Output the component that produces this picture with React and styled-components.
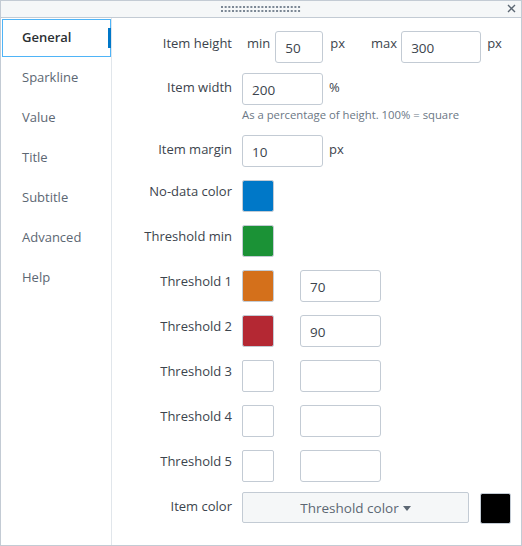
import React from "react";
import styled, { createGlobalStyle } from "styled-components";

const Global = createGlobalStyle`
  html, body {
    margin: 0;
    padding: 0;
    background: #fff;
  }
  * {
    box-sizing: border-box;
  }
`;

const Panel = styled.div`
  width: 522px;
  height: 546px;
  border: 1px solid #c3cbd4;
  display: flex;
  flex-direction: column;
  font-family: "Open Sans", "Liberation Sans", sans-serif;
  font-size: 13px;
  color: #3c444d;
  background: #fff;
`;

const TitleBar = styled.div`
  height: 17px;
  flex: none;
  background: #f5f7f8;
  border-bottom: 1px solid #c3cbd4;
  display: flex;
  align-items: center;
  justify-content: center;
  position: relative;
`;

const CloseButton = styled.span`
  position: absolute;
  right: 5px;
  top: 3px;
  width: 9px;
  height: 9px;
  display: flex;
`;

const Body = styled.div`
  flex: 1;
  display: flex;
  min-height: 0;
`;

const Sidebar = styled.ul`
  width: 111px;
  flex: none;
  margin: 0;
  padding: 1px 0 0 1px;
  list-style: none;
  border-right: 1px solid #e1e6eb;
  display: flex;
  flex-direction: column;
  gap: 2px;
`;

const Tab = styled.li`
  position: relative;
  height: 38px;
  width: 109px;
  padding-left: 19px;
  padding-bottom: 2px;
  display: flex;
  align-items: center;
  border: 1px solid ${({ $active }) => ($active ? "#4fb4f7" : "transparent")};
  color: ${({ $active }) => ($active ? "#2b3033" : "#5c6773")};
  font-weight: ${({ $active }) => ($active ? 600 : 400)};

  &::after {
    content: "";
    display: ${({ $active }) => ($active ? "block" : "none")};
    position: absolute;
    right: -1px;
    top: 8px;
    width: 3px;
    height: 20px;
    background: #0077c8;
  }
`;

const Content = styled.div`
  flex: 1;
  padding-top: 13px;
  display: flex;
  flex-direction: column;
  gap: 13px;
`;

const Row = styled.div`
  display: grid;
  grid-template-columns: 120px 1fr;
  column-gap: 10px;
  margin-top: ${({ $mt }) => $mt || 0}px;
`;

const Label = styled.div`
  text-align: right;
  line-height: 20px;
  padding-top: ${({ $pt }) => ($pt != null ? $pt : 1)}px;
  white-space: nowrap;
`;

const Controls = styled.div`
  display: flex;
  align-items: flex-start;
`;

const Stack = styled.div`
  display: flex;
  flex-direction: column;
`;

const Unit = styled.span`
  line-height: 20px;
  padding-top: ${({ $pt }) => ($pt != null ? $pt : 2)}px;
  margin-left: ${({ $ml }) => $ml || 0}px;
  margin-right: ${({ $mr }) => $mr || 0}px;
  color: #3c444d;
`;

const Input = styled.div`
  width: ${({ $w }) => $w}px;
  height: 32px;
  border: 1px solid #c3cbd4;
  border-radius: 3px;
  padding: 0 9px;
  display: flex;
  align-items: center;
  font-size: 13.5px;
  padding-top: 2px;
  color: #3c444d;
  background: #fff;
  margin-left: ${({ $ml }) => $ml || 0}px;
`;

const Help = styled.div`
  font-size: 11.3px;
  color: #6b7785;
  margin-top: 3px;
  line-height: 14px;
`;

const Swatch = styled.div`
  width: 32px;
  height: 32px;
  border: 1px solid #c3cbd4;
  border-radius: 2px;
  background: ${({ $color }) => $color || "#fff"};
  background-clip: padding-box;
`;

const Dropdown = styled.div`
  width: 227px;
  height: 31px;
  border: 1px solid #c3cbd4;
  border-radius: 2px;
  background: #f5f7f8;
  color: #5c6773;
  font-size: 13.5px;
  display: flex;
  align-items: center;
  justify-content: center;
  gap: 4px;
`;

const Caret = styled.span`
  width: 0;
  height: 0;
  border-left: 4px solid transparent;
  border-right: 4px solid transparent;
  border-top: 5px solid #5c6773;
  margin-top: 1px;
`;

const ColorBox = styled(Swatch)`
  width: 31px;
  height: 31px;
  margin-left: 11px;
  margin-top: 1px;
`;

const tabs = ["General", "Sparkline", "Value", "Title", "Subtitle", "Advanced", "Help"];

const thresholds = [
  { label: "Threshold 1", color: "#d4701b", value: "70" },
  { label: "Threshold 2", color: "#b42833", value: "90" },
  { label: "Threshold 3", color: null, value: "" },
  { label: "Threshold 4", color: null, value: "" },
  { label: "Threshold 5", color: null, value: "" },
];

function Grip() {
  const dots = [];
  for (let i = 0; i < 22; i++) {
    dots.push(<rect key={"a" + i} x={i * 3.67} y={0} width={2} height={2} />);
    dots.push(<rect key={"b" + i} x={i * 3.67} y={4} width={2} height={2} />);
  }
  return (
    <svg width="80" height="6" viewBox="0 0 80 6" fill="#7b8794">
      {dots}
    </svg>
  );
}

export default function App() {
  return (
    <>
      <Global />
      <Panel>
        <TitleBar>
          <Grip />
          <CloseButton>
            <svg width="9" height="9" viewBox="0 0 9 9">
              <path d="M1 1L8 8M8 1L1 8" stroke="#5c6773" strokeWidth="1.4" />
            </svg>
          </CloseButton>
        </TitleBar>
        <Body>
          <Sidebar>
            {tabs.map((t, i) => (
              <Tab key={t} $active={i === 0}>
                {t}
              </Tab>
            ))}
          </Sidebar>
          <Content>
            <Row>
              <Label $pt={2}>Item height</Label>
              <Controls>
                <Unit $ml={5} $mr={5}>min</Unit>
                <Input $w={48}>50</Input>
                <Unit $ml={7}>px</Unit>
                <Unit $ml={26} $mr={4}>max</Unit>
                <Input $w={80}>300</Input>
                <Unit $ml={6}>px</Unit>
              </Controls>
            </Row>
            <Row $mt={-3}>
              <Label $pt={4}>Item width</Label>
              <Stack>
                <Controls>
                  <Input $w={81}>200</Input>
                  <Unit $ml={6} $pt={4}>%</Unit>
                </Controls>
                <Help>As a percentage of height. 100% = square</Help>
              </Stack>
            </Row>
            <Row>
              <Label $pt={4}>Item margin</Label>
              <Controls>
                <Input $w={81}>10</Input>
                <Unit $ml={6} $pt={4}>px</Unit>
              </Controls>
            </Row>
            <Row>
              <Label>No-data color</Label>
              <Controls>
                <Swatch $color="#0078c8" />
              </Controls>
            </Row>
            <Row>
              <Label>Threshold min</Label>
              <Controls>
                <Swatch $color="#1b9236" />
              </Controls>
            </Row>
            {thresholds.map((t) => (
              <Row key={t.label}>
                <Label>{t.label}</Label>
                <Controls>
                  <Swatch $color={t.color} />
                  <Input $w={81} $ml={26}>{t.value}</Input>
                </Controls>
              </Row>
            ))}
            <Row $mt={-3}>
              <Label $pt={4}>Item color</Label>
              <Controls>
                <Dropdown>
                  Threshold color <Caret />
                </Dropdown>
                <ColorBox $color="#000" />
              </Controls>
            </Row>
          </Content>
        </Body>
      </Panel>
    </>
  );
}
